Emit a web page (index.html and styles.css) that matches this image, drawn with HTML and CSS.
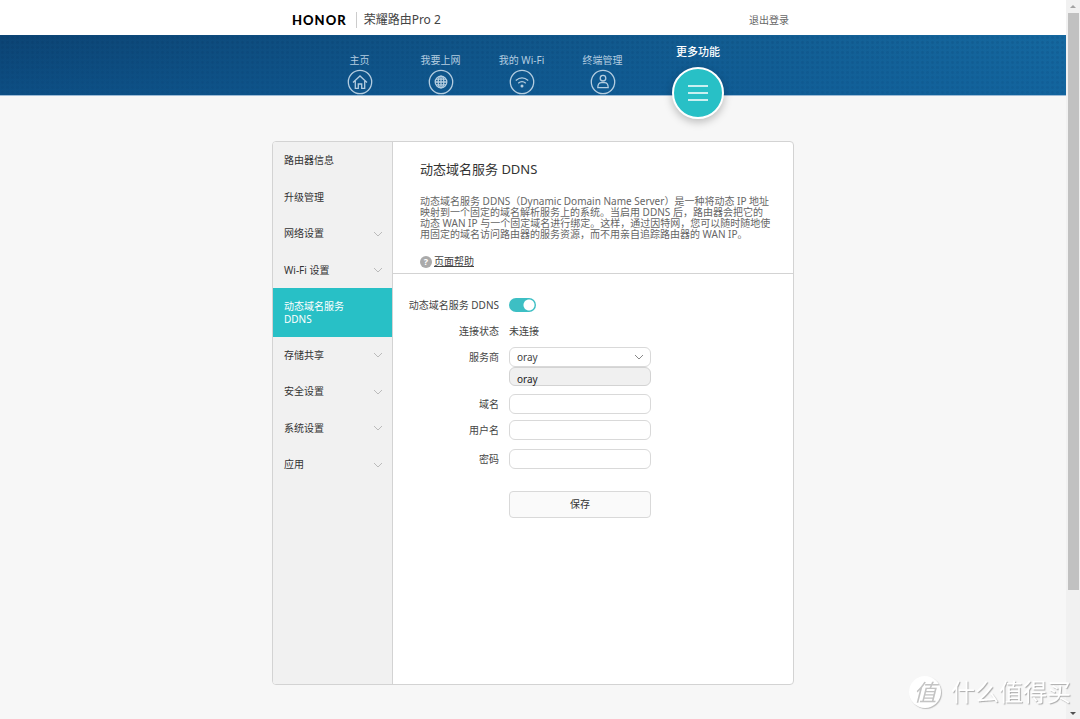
FILE: index.html
```html
<!DOCTYPE html>
<html lang="zh-CN">
<head>
<meta charset="utf-8">
<title>荣耀路由Pro 2</title>
<link rel="stylesheet" href="styles.css">
</head>
<body>
<div class="page">
  <header class="top">
    <div class="wrap top-row">
      <div class="brand"><span class="logo">HONOR</span><span class="model">荣耀路由Pro 2</span></div>
      <a class="logout" href="#">退出登录</a>
    </div>
  </header>
  <nav class="nav">
    <div class="wrap nav-row">
      <a class="nav-item" href="#">主页
        <svg class="nav-icon" viewBox="0 0 26 26"><circle cx="13" cy="13" r="11.7"/><path d="M6 13.500 13 7l7 6.500M8.300 12v7.300h3v-4.300h3.400v4.300h3V12"/></svg></a>
      <a class="nav-item" href="#">我要上网
        <svg class="nav-icon" viewBox="0 0 26 26"><circle cx="13" cy="13" r="11.7"/><circle cx="13" cy="13" r="5.8"/><ellipse cx="13" cy="13" rx="2.8" ry="5.8"/><path d="M13 7.2v11.6M7.2 13h11.6M8 10.2h10M8 15.8h10"/></svg></a>
      <a class="nav-item" href="#">我的 Wi-Fi
        <svg class="nav-icon" viewBox="0 0 26 26"><circle cx="13" cy="13" r="11.7"/><path d="M6.800 11.500q6.200-5.200 12.400 0M9.200 14.200q3.800-3.200 7.600 0"/><circle class="dot" cx="13" cy="17" r="1.5"/></svg></a>
      <a class="nav-item" href="#">终端管理
        <svg class="nav-icon" viewBox="0 0 26 26"><circle cx="13" cy="13" r="11.7"/><circle cx="13" cy="9.2" r="2.8"/><path d="M7.800 18.700q0-5 3.700-5h3q3.700 0 3.700 5z"/></svg></a>
      <a class="nav-item current" href="#">更多功能
        <span class="more"><svg viewBox="0 0 20 16"><path d="M0 1h20M0 8h20M0 15h20"/></svg></span></a>
    </div>
  </nav>
  <main class="wrap panel">
    <ul class="side">
      <li><a href="#">路由器信息</a></li>
      <li><a href="#">升级管理</a></li>
      <li><a href="#">网络设置<svg class="chev" viewBox="0 0 10 6"><path d="M1 1l4 4 4-4"/></svg></a></li>
      <li><a href="#">Wi-Fi 设置<svg class="chev" viewBox="0 0 10 6"><path d="M1 1l4 4 4-4"/></svg></a></li>
      <li class="active"><a href="#">动态域名服务<br>DDNS</a></li>
      <li><a href="#">存储共享<svg class="chev" viewBox="0 0 10 6"><path d="M1 1l4 4 4-4"/></svg></a></li>
      <li><a href="#">安全设置<svg class="chev" viewBox="0 0 10 6"><path d="M1 1l4 4 4-4"/></svg></a></li>
      <li><a href="#">系统设置<svg class="chev" viewBox="0 0 10 6"><path d="M1 1l4 4 4-4"/></svg></a></li>
      <li><a href="#">应用<svg class="chev" viewBox="0 0 10 6"><path d="M1 1l4 4 4-4"/></svg></a></li>
    </ul>
    <div class="content">
      <section class="intro">
        <h1>动态域名服务 DDNS</h1>
        <p>动态域名服务 DDNS（Dynamic Domain Name Server）是一种将动态 IP 地址<br>映射到一个固定的域名解析服务上的系统。当启用 DDNS 后，路由器会把它的<br>动态 WAN IP 与一个固定域名进行绑定。这样，通过因特网，您可以随时随地使<br>用固定的域名访问路由器的服务资源，而不用亲自追踪路由器的 WAN IP。</p>
        <div class="help"><span class="help-mark">?</span><a href="#">页面帮助</a></div>
      </section>
      <form class="form">
        <div class="row"><label for="ddns">动态域名服务 DDNS</label><input class="switch" type="checkbox" id="ddns" checked></div>
        <div class="row"><span class="label">连接状态</span><span>未连接</span></div>
        <div class="row provider"><label for="isp">服务商</label>
          <div class="picker">
            <select class="field" id="isp"><option>oray</option></select>
            <svg class="chev" viewBox="0 0 10 6"><path d="M1 1l4 4 4-4"/></svg>
            <div class="menu">oray</div>
          </div></div>
        <div class="row"><label for="domain">域名</label><input class="field" type="text" id="domain"></div>
        <div class="row user"><label for="user">用户名</label><input class="field" type="text" id="user"></div>
        <div class="row"><label for="pass">密码</label><input class="field" type="password" id="pass"></div>
        <button class="save" type="button">保存</button>
      </form>
    </div>
  </main>
</div>
<div class="scroll"><span class="arrow up"></span><span class="thumb"></span><span class="arrow down"></span></div>
<div class="mark"><span class="mark-badge">值</span><span class="mark-text">什么值得买</span></div>
</body>
</html>
```
FILE: styles.css
```css
* { box-sizing: border-box; }
body {
  margin: 0;
  min-height: 100vh;
  display: flex;
  background: #f7f7f7;
  color: #444;
  font: 10px/13px "Noto Sans", "Noto Sans CJK SC", sans-serif;
}
a { color: inherit; text-decoration: none; }
svg { fill: none; stroke: currentColor; display: block; }
.page { flex: 1; display: flex; flex-direction: column; }
.wrap { width: 100%; max-width: 522px; margin: 0 auto; }

.top { background: #fff; }
.top-row { display: flex; justify-content: space-between; align-items: center; height: 35px; padding: 5px 5px 0 20px; }
.brand { display: flex; align-items: center; }
.logo { color: #000; font: 900 13px/16px Lato, sans-serif; letter-spacing: 1px; padding-right: 9px; border-right: 1px solid #ccc; }
.model { font-size: 12px; line-height: 16px; padding-left: 7px; }
.logout { color: #666; }

.nav {
  height: 61px;
  border-bottom: 1px solid #9dbbd6;
  background:
    linear-gradient(transparent, rgba(14, 94, 156, .4)),
    radial-gradient(circle, rgba(0, 30, 70, .1) 1px, transparent 2px) 0 0 / 5px 5px,
    linear-gradient(90deg, #0c4474, #15689f);
}
.nav-row { display: flex; padding-left: 47px; }
.nav-item { width: 81px; padding-top: 19px; display: flex; flex-direction: column; align-items: center; color: #b4cde0; gap: 2px; }
.nav-icon { width: 26px; height: 26px; stroke-width: 1.3; }
.dot { fill: currentColor; stroke: none; }
.nav-item.current { width: 110px; padding-top: 10px; gap: 9px; color: #fff; font-size: 11px; font-weight: 500; }
.more {
  width: 52px; height: 52px; flex: none; border: 2px solid #fff; border-radius: 50%;
  background: #28c0c6; display: grid; place-items: center; box-shadow: 0 3px 8px rgba(0, 0, 0, .25);
}
.more svg { width: 20px; height: 16px; stroke-width: 1.5; }

.panel { flex: 1; margin-top: 45px; margin-bottom: 34px; display: flex; border: 1px solid #d3d3d3; border-radius: 4px; background: #fff; overflow: hidden; }
.side { flex: none; width: 120px; margin: 0; padding: 0; list-style: none; background: #f1f1f1; border-right: 1px solid #d3d3d3; color: #333; }
.side a { display: flex; align-items: center; justify-content: space-between; height: 37px; padding: 0 9px 0 11px; }
.side li:nth-child(even) a { height: 36px; }
.side .active a { height: 49px; background: #28c0c6; color: #fff; }
.chev { width: 10px; height: 6px; color: #bbb; }
.content { flex: 1; }
.intro { padding: 18px 20px 5px 27px; border-bottom: 1px solid #d3d3d3; }
h1 { margin: 0; font-size: 13px; font-weight: 400; line-height: 18px; color: #333; }
p { margin: 18px 0 0; line-height: 11px; color: #666; white-space: nowrap; }
.help { display: flex; align-items: center; gap: 2px; margin-top: 15px; }
.help a { text-decoration: underline; }
.help-mark { width: 12px; height: 12px; border-radius: 50%; background: #aaa; color: #fff; font-weight: 700; font-size: 9px; line-height: 12px; text-align: center; }

.form { padding: 18px 0 30px; }
.row { display: grid; grid-template-columns: 106px 142px; column-gap: 10px; align-items: center; height: 26px; }
.row label, .label { text-align: right; white-space: nowrap; }
.switch { appearance: none; margin: 0; width: 27px; height: 14px; border-radius: 7px; background: radial-gradient(circle at 20px 50%, #fff 5px, transparent 6px), #3dbfc4; }
.field { appearance: none; display: block; width: 100%; height: 20px; margin: 0; padding: 0 7px; border: 1px solid #d9d9d9; border-radius: 6px; background: #fff; color: #444; font: inherit; }
.picker { position: relative; }
.picker .chev { position: absolute; right: 7px; top: 7px; color: #888; }
.menu { position: absolute; top: 20px; left: 0; right: 0; height: 19px; padding: 4px 7px 0; line-height: 14px; background: #f0f0f0; border: 1px solid #d3d3d3; border-radius: 6px; color: #222; }
.provider { margin-bottom: 21px; }
.user { margin-bottom: 3px; }
.save { display: block; width: 142px; height: 27px; margin: 19px 0 0 116px; border: 1px solid #d9d9d9; border-radius: 4px; background: #fafafa; color: #333; font: inherit; }

.scroll { width: 14px; display: flex; flex-direction: column; align-items: center; height: 100vh; background: #f1f1f1; padding: 5px 1px 4px; }
.thumb { flex: 0 1 577px; width: 11px; margin: 5px 0 auto; background: #c1c1c1; }
.arrow { border: 3px solid transparent; flex: none; }
.up { border-top: 0; border-bottom-color: #a3a3a3; }
.down { border-bottom: 0; border-top-color: #505050; }

.mark { position: fixed; right: 9px; bottom: 11px; display: flex; align-items: center; gap: 10px; color: #fff; }
.mark-badge { width: 32px; height: 32px; border-radius: 50%; background: #fff; color: #c4c4c4; font-size: 23px; line-height: 32px; text-align: center; box-shadow: 1px 1px 1px #bbb; font-style: italic; }
.mark-text { font-size: 24px; line-height: 32px; text-shadow: 1px 1px 1px #aaa; }
```
